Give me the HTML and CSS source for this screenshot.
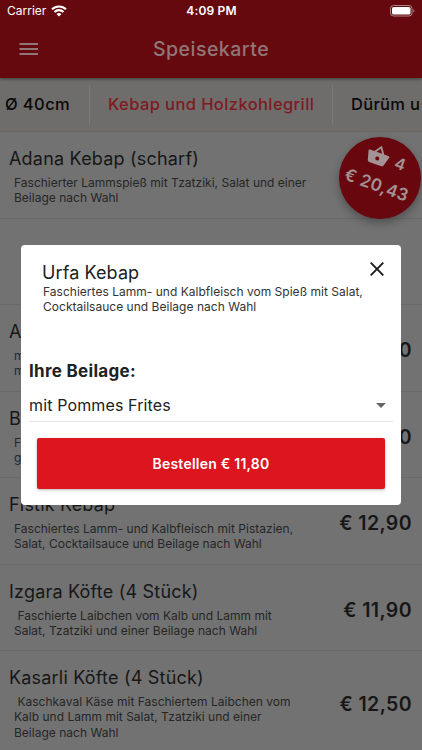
FILE: index.html
```html
<!DOCTYPE html>
<html lang="de">
<head>
<meta charset="utf-8">
<title>Speisekarte</title>
<link rel="stylesheet" href="styles.css">
</head>
<body>
<header class="appbar">
  <div class="status">
    <div class="carrier"><span>Carrier</span>
      <svg width="16" height="12" viewBox="0 0 16 12" fill="none" stroke="#fff" stroke-width="2.1"><path d="M1 4.3a10 10 0 0 1 14 0M3.5 7a6.4 6.4 0 0 1 9 0"/><path d="M8 11.6 5.5 9.1a3.6 3.6 0 0 1 5 0z" fill="#fff" stroke="none"/></svg>
    </div>
    <div class="clock">4:09 PM</div>
    <svg class="battery" width="26" height="12" viewBox="0 0 26 12"><rect x=".5" y=".5" width="21.5" height="10.5" rx="3" fill="none" stroke="#b28286"/><rect x="2" y="2" width="18.5" height="7.5" rx="1.6" fill="#fff"/><path d="M23.3 4v3.6c1.5-.5 1.5-3.1 0-3.6z" fill="#b28286"/></svg>
  </div>
  <div class="toolbar">
    <svg class="menu" width="19" height="14" viewBox="0 0 19 14" fill="#917678"><path d="M.5 1H19v2H.5zM.5 6H19v2H.5zM.5 11H19v2H.5z"/></svg>
    <h1>Speisekarte</h1>
  </div>
</header>
<nav class="tabs">
  <span class="tab first">Ø 40cm</span>
  <span class="tab active">Kebap und Holzkohlegrill</span>
  <span class="tab last">Dürüm u</span>
</nav>
<main class="list">
  <article class="row"><div class="info"><h2>Adana Kebap (scharf)</h2><p>Faschierter Lammspieß mit Tzatziki, Salat und einer<br>Beilage nach Wahl</p></div></article>
  <article class="row blank"></article>
  <article class="row"><div class="info"><h2>A</h2><p>m<br>m</p></div><b class="price">0</b></article>
  <article class="row"><div class="info"><h2>B</h2><p>F<br>g</p></div><b class="price">0</b></article>
  <article class="row"><div class="info"><h2>Fistik Kebap</h2><p>Faschiertes Lamm- und Kalbfleisch mit Pistazien,<br>Salat, Cocktailsauce und Beilage nach Wahl</p></div><b class="price">€ 12,90</b></article>
  <article class="row"><div class="info"><h2>Izgara Köfte (4 Stück)</h2><p>&nbsp;Faschierte Laibchen vom Kalb und Lamm mit<br>Salat, Tzatziki und einer Beilage nach Wahl</p></div><b class="price">€ 11,90</b></article>
  <article class="row tall"><div class="info"><h2>Kasarli Köfte (4 Stück)</h2><p>&nbsp;Kaschkaval Käse mit Faschiertem Laibchen vom<br>Kalb und Lamm mit Salat, Tzatziki und einer<br>Beilage nach Wahl</p></div><b class="price">€ 12,50</b></article>
</main>
<aside class="cart">
  <div class="cart-inner">
    <div class="count"><svg width="24" height="24" viewBox="0 0 24 24" fill="#a39394"><path d="M17.21 9l-4.38-6.56c-.19-.28-.51-.42-.83-.42-.32 0-.64.14-.83.43L6.79 9H2c-.55 0-1 .45-1 1 0 .09.01.18.04.27l2.54 9.27c.23.84 1 1.46 1.92 1.46h13c.92 0 1.69-.62 1.93-1.46l2.54-9.27L23 10c0-.55-.45-1-1-1h-4.79zM9 9l3-4.4L15 9H9zm3 8c-1.1 0-2-.9-2-2s.9-2 2-2 2 .9 2 2-.9 2-2 2z"/></svg><span>4</span></div>
    <div class="sum">€ 20,43</div>
  </div>
</aside>
<section class="dialog">
  <div class="head">
    <h2>Urfa Kebap</h2>
    <svg width="14" height="14" viewBox="0 0 14 14" stroke="#1c1c1c" stroke-width="1.9"><path d="M.7.7l12.6 12.6M13.3.7.7 13.3"/></svg>
  </div>
  <p class="desc">Faschiertes Lamm- und Kalbfleisch vom Spieß mit Salat,<br>Cocktailsauce und Beilage nach Wahl</p>
  <h3>Ihre Beilage:</h3>
  <div class="select"><span>mit Pommes Frites</span><svg width="10" height="5" viewBox="0 0 10 5" fill="#666"><path d="M0 0h10L5 5z"/></svg></div>
  <button class="order">Bestellen € 11,80</button>
</section>
</body>
</html>
```
FILE: styles.css
```css
* { box-sizing: border-box; }
body { margin: 0; width: 422px; height: 750px; overflow: hidden; position: relative; background: #727272; font-family: Inter, "Liberation Sans", sans-serif; color: #171717; }
h1, h2, h3, p { margin: 0; font-weight: 400; }
svg { display: block; flex: none; }
.appbar { height: 78px; background: #66090f; position: relative; box-shadow: 0 1px 3px rgba(0,0,0,.45); }
.status { height: 22px; padding: 0 6px 0 7px; display: grid; grid-template-columns: 1fr auto 1fr; align-items: center; color: #fff; font-size: 12px; line-height: 22px; }
.carrier { display: flex; align-items: center; gap: 5px; letter-spacing: 0; }
.clock { font-weight: 600; letter-spacing: .15px; }
.battery { justify-self: end; }
.toolbar { height: 54px; padding-left: 19px; display: grid; grid-template-columns: 19px 1fr 38px; align-items: center; }
.toolbar h1 { text-align: center; font-size: 19.5px; font-weight: 500; color: #917678; letter-spacing: .5px; line-height: 54px; }
.tabs { height: 54px; display: flex; align-items: center; background: #6f6d6b; border-bottom: 1px solid #6c6465; white-space: nowrap; overflow: hidden; font-size: 16.5px; font-weight: 500; color: #080808; letter-spacing: .4px; }
.tab { flex: none; height: 40px; line-height: 38px; }
.first { width: 90px; padding-left: 5px; border-right: 1px solid #7a7977; }
.active { width: 243px; padding-left: 18px; color: #7e1a21; border-right: 1px solid #7a7977; }
.last { padding-left: 18px; letter-spacing: .3px; }
.row { height: 86.5px; border-bottom: 1px solid #696969; padding: 15px 10px 0 9px; display: flex; justify-content: space-between; }
.tall { height: 102px; }
.info h2 { font-size: 18px; line-height: 24px; letter-spacing: .2px; }
.info p { font-size: 12px; line-height: 15.4px; letter-spacing: .01px; padding: 4px 0 0 5px; color: #262626; }
.price { align-self: center; margin-top: -10px; font-size: 19.5px; font-weight: 600; letter-spacing: .4px; }
.cart { position: absolute; left: 339px; top: 137px; width: 82px; height: 82px; border-radius: 50%; background: #69070e; box-shadow: 0 4px 8px rgba(0,0,0,.3); color: #a39394; font-weight: 600; }
.cart-inner { transform: rotate(20deg); display: flex; flex-direction: column; align-items: center; padding: 8px 0 2px 5px; }
.count { display: flex; align-items: center; gap: 6px; font-size: 16px; height: 24px; }
.sum { font-size: 17px; line-height: 26px; padding-top: 3px; letter-spacing: .3px; white-space: nowrap; }
.dialog { position: absolute; left: 21px; top: 245px; width: 380px; height: 260px; border-radius: 4px; background: #fff; padding: 16px 8px 16px; color: #212121; }
.head { display: flex; justify-content: space-between; padding: 0 9px 0 13px; height: 23px; }
.head h2 { font-size: 18px; line-height: 23px; letter-spacing: .1px; }
.head svg { margin-top: 1px; }
.desc { padding-left: 14px; font-size: 12px; line-height: 15.2px; height: 71px; letter-spacing: .02px; color: #333; white-space: nowrap; }
h3 { font-size: 17px; font-weight: 700; line-height: 32px; letter-spacing: .3px; }
.select { height: 35px; border-bottom: 1px solid #e3e3e3; display: flex; align-items: center; justify-content: space-between; padding: 2px 7px 0 0; font-size: 16px; letter-spacing: .13px; }
.order { display: block; margin: 16px 8px 0; width: 348px; height: 51px; border: 0; border-radius: 2px; background: #dc151f; color: #fff; font: 600 14px Inter, sans-serif; letter-spacing: .23px; box-shadow: 0 1px 3px rgba(0,0,0,.3); }
```
